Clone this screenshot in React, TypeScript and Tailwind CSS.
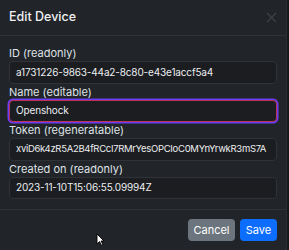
import React from "react";

const font = { fontFamily: '"Inter", "Noto Sans", sans-serif' };

function Field({ label, value, focused, tight }: { label: string; value: string; focused?: boolean; tight?: boolean }) {
  const base = "h-[22.5px] rounded-[4px] bg-[#1b1d21] border flex items-center px-[6px] text-[#eceef0] overflow-hidden whitespace-nowrap ";
  const size = tight ? "text-[9.5px] tracking-[-0.3px] " : "text-[10px] tracking-[-0.15px] ";
  const border = focused ? "border-[#b8325a] shadow-[0_0_0_1.5px_#6a3df0]" : "border-[#2f3236]";
  return (
    <div className="flex flex-col">
      <div className="h-[16px] text-[11px] leading-[16px] text-[#dfe2e6]">{label}</div>
      <div className={base + size + border}>{value}</div>
    </div>
  );
}

export default function App() {
  return (
    <div className="w-[289px] h-[250px] bg-[#16181b] relative overflow-hidden" style={font}>
      <div className="w-[287px] h-[250px] bg-[#212428] border-r border-[#2c2f33] flex flex-col">
        <div className="h-[36px] px-[9px] flex items-center justify-between border-b border-[#2f3338]">
          <div className="text-[12.5px] text-[#eef0f2] font-medium">Edit Device</div>
          <svg width="11" height="11" viewBox="0 0 11 11">
            <path d="M1 1L10 10M10 1L1 10" stroke="#3c4146" strokeWidth="1.3" />
          </svg>
        </div>
        <div className="px-[9px] pt-[9px] pb-[10px] flex flex-col">
          <Field label="ID (readonly)" value="a1731226-9863-44a2-8c80-e43e1accf5a4" />
          <Field label="Name (editable)" value="Openshock" focused />
          <Field label="Token (regeneratable)" value="xviD6k4zR5A2B4fRCcI7RMrYesOPCIoC0MYnYrwkR3mS7A" tight />
          <Field label="Created on (readonly)" value="2023-11-10T15:06:55.09994Z" />
        </div>
        <div className="border-t border-[#2f3338] flex justify-end gap-[5px] pt-[9px] pr-[9px]">
          <button className="h-[22px] w-[47px] rounded-[4px] bg-[#6c757d] text-white text-[11px]">Cancel</button>
          <button className="h-[22px] w-[37px] rounded-[4px] bg-[#0d6efd] text-white text-[11px]">Save</button>
        </div>
      </div>
      <svg className="absolute left-[96px] top-[233px]" width="9" height="13" viewBox="0 0 9 13">
        <path d="M1 1L1 11L3.5 8.6L5.3 12.2L6.8 11.5L5 8L8 8Z" fill="white" stroke="black" strokeWidth="0.9" />
      </svg>
    </div>
  );
}
